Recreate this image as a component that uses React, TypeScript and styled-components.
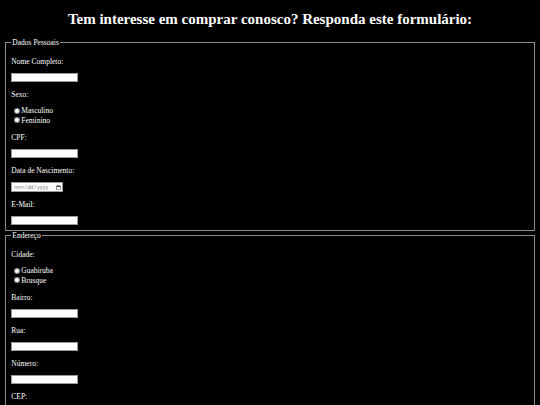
import React from "react";
import styled, { createGlobalStyle } from "styled-components";

const GlobalStyle = createGlobalStyle`
  html, body {
    background: #000;
  }
  body {
    margin: 3.75px;
    color: #fff;
    font-family: "Liberation Serif", "Times New Roman", serif;
    font-size: 7.5px;
    line-height: normal;
  }
`;

const Title = styled.h1`
  margin: 7px 0 10px;
  font-size: 15px;
  font-weight: bold;
  text-align: center;
`;

const Form = styled.form`
  display: block;
  margin: 0;
`;

const Fieldset = styled.fieldset`
  margin: 0 1px;
  padding: 2.6px 5.6px 4.7px;
  border: 1px solid #8c8c8c;
  min-width: 0;
`;

const Legend = styled.legend`
  padding: 0 1px;
  font-size: 7.5px;
`;

const Label = styled.p`
  margin: 7.5px 0;
`;

const TextInput = styled.input`
  box-sizing: border-box;
  display: inline-block;
  width: 67px;
  height: 9px;
  margin: 0;
  padding: 0 1px;
  background: #fff;
  border: 0.6px solid #9a9a9a;
  font-size: 6.25px;
  font-family: "Liberation Sans", Arial, sans-serif;
  vertical-align: baseline;
`;

const DateInput = styled.input`
  box-sizing: border-box;
  display: inline-block;
  width: 52px;
  height: 10px;
  margin: 0;
  padding: 0 1px;
  background: #fff;
  color: #555;
  border: 0.6px solid #9a9a9a;
  font-size: 5.6px;
  font-family: "Liberation Sans", Arial, sans-serif;
  color-scheme: light;

  &::-webkit-datetime-edit {
    padding: 0;
    color: #777;
  }
  &::-webkit-datetime-edit-fields-wrapper {
    padding: 0;
  }
  &::-webkit-calendar-picker-indicator {
    width: 5px;
    height: 5px;
    padding: 0;
    margin: 0 0 0 2px;
  }
`;

const RadioLine = styled.label`
  display: block;
  line-height: 9px;
  color: #fff;
`;

const Radio = styled.input`
  width: 6px;
  height: 6px;
  margin: 1.4px 1.6px 0 2.3px;
  vertical-align: baseline;
  accent-color: #fff;
`;

type Field =
  | { kind: "text"; label: string }
  | { kind: "date"; label: string }
  | { kind: "radio"; label: string; name: string; options: string[] };

const pessoais: Field[] = [
  { kind: "text", label: "Nome Completo:" },
  { kind: "radio", label: "Sexo:", name: "sexo", options: ["Masculino", "Feminino"] },
  { kind: "text", label: "CPF:" },
  { kind: "date", label: "Data de Nascimento:" },
  { kind: "text", label: "E-Mail:" },
];

const endereco: Field[] = [
  { kind: "radio", label: "Cidade:", name: "cidade", options: ["Guabiruba", "Brusque"] },
  { kind: "text", label: "Bairro:" },
  { kind: "text", label: "Rua:" },
  { kind: "text", label: "Número:" },
  { kind: "text", label: "CEP:" },
];

function renderField(f: Field, i: number) {
  return (
    <React.Fragment key={i}>
      <Label>{f.label}</Label>
      {f.kind === "text" && <TextInput type="text" />}
      {f.kind === "date" && <DateInput type="date" />}
      {f.kind === "radio" &&
        f.options.map((o) => (
          <RadioLine key={o}>
            <Radio type="radio" name={f.name} />
            {o}
          </RadioLine>
        ))}
    </React.Fragment>
  );
}

export default function App() {
  return (
    <>
      <GlobalStyle />
      <Title>Tem interesse em comprar conosco? Responda este formulário:</Title>
      <Form>
        <Fieldset>
          <Legend>Dados Pessoais</Legend>
          {pessoais.map(renderField)}
        </Fieldset>
        <Fieldset>
          <Legend>Endereço</Legend>
          {endereco.map(renderField)}
        </Fieldset>
      </Form>
    </>
  );
}
